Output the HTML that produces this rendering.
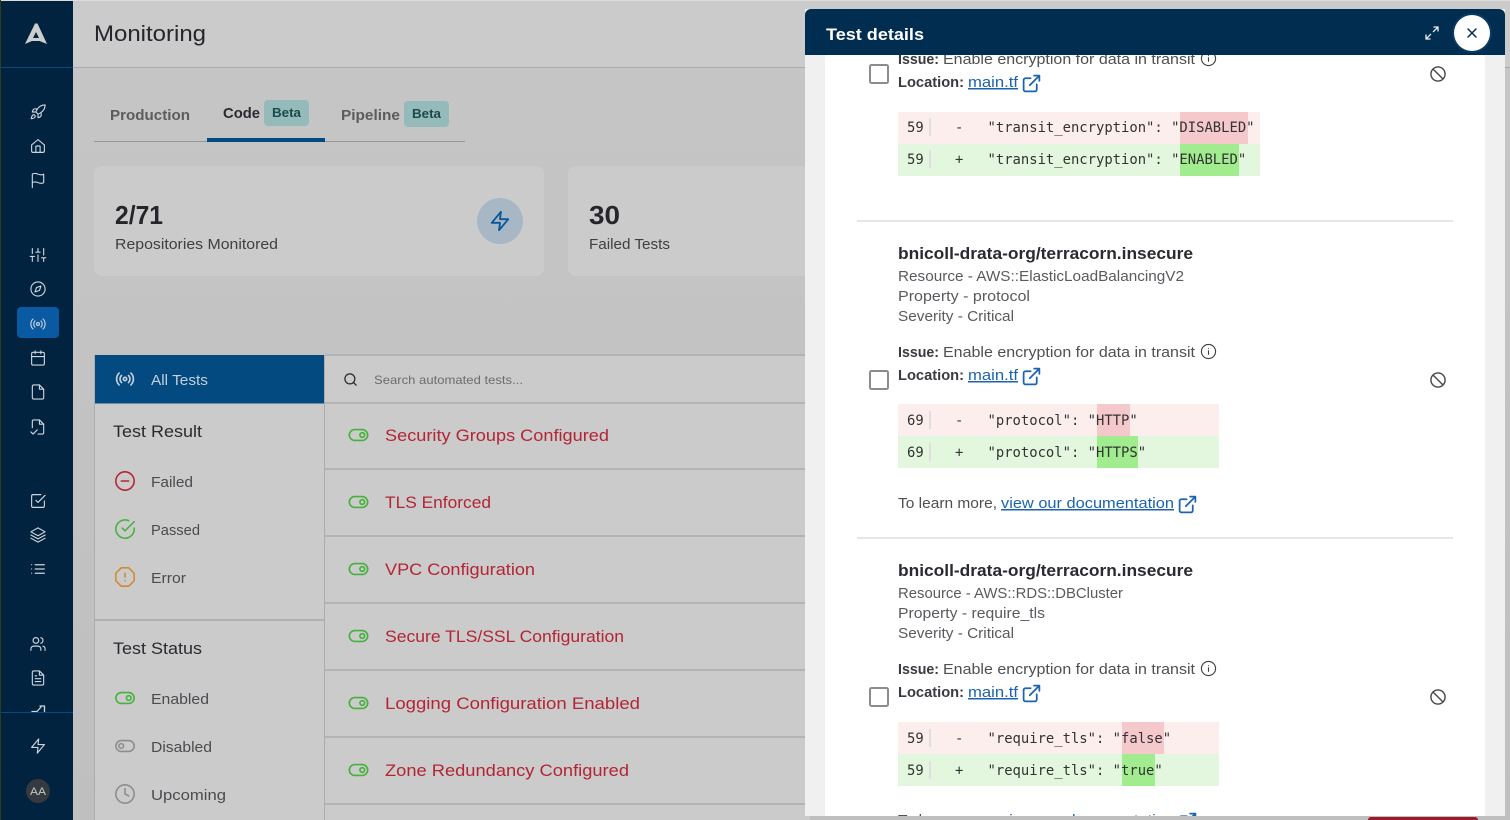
<!DOCTYPE html>
<html lang="en"><head><meta charset="utf-8"><title>Monitoring</title>
<style>
html,body{margin:0;padding:0;background:#c4c4c4;width:1510px;height:820px;overflow:hidden}
svg{display:block}
text{font-family:"Liberation Sans",sans-serif}
text.m{font-family:"DejaVu Sans Mono","Liberation Mono",monospace;font-size:13.870px;fill:#333}
</style></head><body>
<svg width="1510" height="820" viewBox="0 0 1510 820" xmlns="http://www.w3.org/2000/svg">
<defs>
<linearGradient id="bg" x1="0" y1="0" x2="0" y2="1"><stop offset="0" stop-color="#c6c6c6"/><stop offset="1" stop-color="#bfbfbf"/></linearGradient>
<clipPath id="body"><rect x="805" y="55" width="700" height="761"/></clipPath>
<symbol id="rocket" viewBox="0 0 24 24"><path d="M4.500 16.500c-1.500 1.300-2 5-2 5s3.700-.5 5-2c.7-.8.7-2.100-.1-2.900a2.200 2.200 0 0 0-2.900-.1z"/><path d="m12 15-3-3a22 22 0 0 1 2-3.950A12.900 12.900 0 0 1 22 2c0 2.700-.8 7.500-6 11a22.400 22.400 0 0 1-4 2z"/><path d="M9 12H4s.55-3 2-4c1.600-1.100 5 0 5 0M12 15v5s3-.55 4-2c1.100-1.600 0-5 0-5"/></symbol>
<symbol id="home" viewBox="0 0 24 24"><path d="M3 10.500 12 3l9 7.500V19a2 2 0 0 1-2 2H5a2 2 0 0 1-2-2z"/><path d="M9 21v-8a1 1 0 0 1 1-1h4a1 1 0 0 1 1 1v8"/></symbol>
<symbol id="flag" viewBox="0 0 24 24"><path d="M4 15s1-1 4-1 5 2 8 2 4-1 4-1V3s-1 1-4 1-5-2-8-2-4 1-4 1z"/><path d="M4 22v-7"/></symbol>
<symbol id="sliders" viewBox="0 0 24 24"><path d="M4 21v-7M4 10V3M12 21v-9M12 8V3M20 21v-5M20 12V3M1 14h6M9 8h6M17 16h6"/></symbol>
<symbol id="compass" viewBox="0 0 24 24"><circle cx="12" cy="12" r="10"/><path d="m16.200 7.800-2.100 6.300-6.300 2.100 2.100-6.300z"/></symbol>
<symbol id="radio" viewBox="0 0 24 24"><circle cx="12" cy="12" r="2"/><path d="M16.200 7.800a6 6 0 0 1 0 8.500M7.800 16.200a6 6 0 0 1 0-8.500M19.100 4.900a10 10 0 0 1 0 14.200M4.900 19.100a10 10 0 0 1 0-14.200"/></symbol>
<symbol id="cal" viewBox="0 0 24 24"><rect x="3" y="4" width="18" height="18" rx="2"/><path d="M8 2v4M16 2v4M3 10h18"/></symbol>
<symbol id="file" viewBox="0 0 24 24"><path d="M14 2H6a2 2 0 0 0-2 2v16a2 2 0 0 0 2 2h12a2 2 0 0 0 2-2V8z"/><path d="M14 2v6h6"/></symbol>
<symbol id="filecheck" viewBox="0 0 24 24"><path d="M4 13V4a2 2 0 0 1 2-2h8l6 6v12a2 2 0 0 1-2 2h-6"/><path d="M14 2v6h6M2 19l3 3 6-6"/></symbol>
<symbol id="check" viewBox="0 0 24 24"><path d="m9 11 3 3L22 4"/><path d="M21 12v7a2 2 0 0 1-2 2H5a2 2 0 0 1-2-2V5a2 2 0 0 1 2-2h11"/></symbol>
<symbol id="layers" viewBox="0 0 24 24"><path d="m12 2 10 5.500L12 13 2 7.500z"/><path d="m2 12 10 5.500L22 12M2 16.500 12 22l10-5.500"/></symbol>
<symbol id="list" viewBox="0 0 24 24"><path d="M8 6h13M8 12h13M8 18h13M3 6h.01M3 12h.01M3 18h.01"/></symbol>
<symbol id="users" viewBox="0 0 24 24"><path d="M16 21v-2a4 4 0 0 0-4-4H6a4 4 0 0 0-4 4v2"/><circle cx="9" cy="7" r="4"/><path d="M22 21v-2a4 4 0 0 0-3-3.870M16 3.130a4 4 0 0 1 0 7.750"/></symbol>
<symbol id="filetext" viewBox="0 0 24 24"><path d="M14 2H6a2 2 0 0 0-2 2v16a2 2 0 0 0 2 2h12a2 2 0 0 0 2-2V8z"/><path d="M14 2v6h6M16 13H8M16 17H8M10 9H8"/></symbol>
<symbol id="bolt" viewBox="0 0 24 24"><path d="M13 2 3 14h9l-1 8 10-12h-9z"/></symbol>
<symbol id="ext" viewBox="0 0 24 24"><path d="M18 13v6a2 2 0 0 1-2 2H5a2 2 0 0 1-2-2V8a2 2 0 0 1 2-2h6"/><path d="M15 3h6v6M10 14 21 3"/></symbol>
<symbol id="info" viewBox="0 0 24 24"><circle cx="12" cy="12" r="10"/><path d="M12 16v-5M12 8h.01"/></symbol>
<symbol id="ban" viewBox="0 0 24 24"><circle cx="12" cy="12" r="10"/><path d="m4.900 4.900 14.200 14.200"/></symbol>
<symbol id="toggle" viewBox="0 0 24 24"><rect x="1" y="5.500" width="22" height="13" rx="6.500"/><circle cx="16.500" cy="12" r="2.800"/></symbol>
<symbol id="toggleoff" viewBox="0 0 24 24"><rect x="1" y="5.500" width="22" height="13" rx="6.500"/><circle cx="7.500" cy="12" r="2.800"/></symbol>
<symbol id="clock" viewBox="0 0 24 24"><circle cx="12" cy="12" r="10"/><path d="M12 6v6l4 2"/></symbol>
<symbol id="search" viewBox="0 0 24 24"><circle cx="11" cy="11" r="8"/><path d="m21 21-4.300-4.300"/></symbol>
<symbol id="minus" viewBox="0 0 24 24"><circle cx="12" cy="12" r="10"/><path d="M8 12h8"/></symbol>
<symbol id="passed" viewBox="0 0 24 24"><path d="M22 11v1a10 10 0 1 1-6-9.100"/><path d="m22 4-10 10-3-3"/></symbol>
<symbol id="octagon" viewBox="0 0 24 24"><path d="M7.900 2h8.200L22 7.900v8.200L16.100 22H7.900L2 16.100V7.900z"/><path d="M12 8v4M12 16h.01"/></symbol>
<symbol id="expand" viewBox="0 0 24 24"><path d="M15 3h6v6M14 10l7-7M9 21H3v-6M10 14l-7 7"/></symbol>
</defs>

<rect width="1510" height="820" fill="url(#bg)"/>
<rect x="0" y="0" width="1510" height="1" fill="#dcdcdc"/>
<rect x="0" y="0" width="1" height="820" fill="#2f3d1c"/>
<!-- header -->
<rect x="73" y="1" width="1437" height="66" fill="#cbcbcb"/>
<rect x="73" y="67" width="1437" height="1" fill="#a9a9a9"/>
<text x="94" y="41" font-size="22" fill="#25252b" textLength="112" lengthAdjust="spacingAndGlyphs">Monitoring</text>

<!-- tabs -->
<rect x="94" y="141" width="371" height="1" fill="#989898"/>
<rect x="207" y="138" width="118" height="4" fill="#034a80"/>
<text x="110" y="120" font-size="15" font-weight="700" fill="#5c5c5c" textLength="80" lengthAdjust="spacingAndGlyphs">Production</text>
<text x="223" y="118" font-size="15" font-weight="700" fill="#2a2a30" textLength="37" lengthAdjust="spacingAndGlyphs">Code</text>
<rect x="264" y="100" width="45" height="26" rx="4" fill="#95baba"/>
<text x="272" y="117" font-size="13" font-weight="700" fill="#1c4a4d" textLength="29" lengthAdjust="spacingAndGlyphs">Beta</text>
<text x="341" y="120" font-size="15" font-weight="700" fill="#5c5c5c" textLength="59" lengthAdjust="spacingAndGlyphs">Pipeline</text>
<rect x="404" y="101" width="45" height="26" rx="4" fill="#95baba"/>
<text x="412" y="118" font-size="13" font-weight="700" fill="#1c4a4d" textLength="29" lengthAdjust="spacingAndGlyphs">Beta</text>

<!-- cards -->
<rect x="94" y="166" width="450" height="110" rx="8" fill="#cbcbcb"/>
<rect x="568" y="166" width="300" height="110" rx="8" fill="#cbcbcb"/>
<text x="115" y="224" font-size="26" font-weight="700" fill="#25252b" textLength="48" lengthAdjust="spacingAndGlyphs">2/71</text>
<text x="115" y="249" font-size="15" fill="#3f3f44" textLength="163" lengthAdjust="spacingAndGlyphs">Repositories Monitored</text>
<circle cx="500" cy="221" r="23" fill="#a8b7c5"/>
<use href="#bolt" x="489" y="210" width="22" height="22" fill="none" stroke="#0a5799" stroke-width="2" stroke-linejoin="round"/>
<text x="589" y="224" font-size="26" font-weight="700" fill="#25252b" textLength="31" lengthAdjust="spacingAndGlyphs">30</text>
<text x="589" y="249" font-size="15" fill="#3f3f44" textLength="81" lengthAdjust="spacingAndGlyphs">Failed Tests</text>

<!-- filter panel -->
<rect x="94" y="355" width="231" height="465" fill="#cbcbcb"/>
<rect x="94" y="355" width="1" height="465" fill="#adadad"/>
<rect x="324" y="355" width="1" height="465" fill="#adadad"/>
<rect x="95" y="355" width="229" height="49" fill="#034a80"/>
<rect x="95" y="403" width="229" height="1" fill="#6f8ba3"/>
<use href="#radio" x="115" y="369" width="20" height="20" fill="none" stroke="#c4cfd9" stroke-width="2" stroke-linecap="round"/>
<text x="151" y="385" font-size="15" fill="#c4cfd9" textLength="57" lengthAdjust="spacingAndGlyphs">All Tests</text>
<text x="113" y="437" font-size="17" fill="#2a2a30" textLength="89" lengthAdjust="spacingAndGlyphs">Test Result</text>
<use href="#minus" x="114" y="470" width="22" height="22" fill="none" stroke="#b32535" stroke-width="1.700" stroke-linecap="round"/>
<text x="151" y="487" font-size="15" fill="#4b4b50" textLength="42" lengthAdjust="spacingAndGlyphs">Failed</text>
<use href="#passed" x="114" y="518" width="22" height="22" fill="none" stroke="#46b13c" stroke-width="1.700" stroke-linecap="round" stroke-linejoin="round"/>
<text x="151" y="535" font-size="15" fill="#4b4b50" textLength="49" lengthAdjust="spacingAndGlyphs">Passed</text>
<use href="#octagon" x="114" y="566" width="22" height="22" fill="none" stroke="#cf8a2e" stroke-width="1.700" stroke-linecap="round" stroke-linejoin="round"/>
<text x="151" y="583" font-size="15" fill="#4b4b50" textLength="35" lengthAdjust="spacingAndGlyphs">Error</text>
<rect x="95" y="619" width="229" height="2" fill="#b0b0b0"/>
<text x="113" y="654" font-size="17" fill="#2a2a30" textLength="89" lengthAdjust="spacingAndGlyphs">Test Status</text>
<use href="#toggle" x="115" y="688" width="20" height="20" fill="none" stroke="#46b13c" stroke-width="1.900"/>
<text x="151" y="704" font-size="15" fill="#4b4b50" textLength="58" lengthAdjust="spacingAndGlyphs">Enabled</text>
<use href="#toggleoff" x="115" y="736" width="20" height="20" fill="none" stroke="#8d8d8d" stroke-width="1.900"/>
<text x="151" y="752" font-size="15" fill="#4b4b50" textLength="61" lengthAdjust="spacingAndGlyphs">Disabled</text>
<use href="#clock" x="114" y="783" width="22" height="22" fill="none" stroke="#8d8d8d" stroke-width="1.700" stroke-linecap="round" stroke-linejoin="round"/>
<text x="151" y="800" font-size="15" fill="#4b4b50" textLength="75" lengthAdjust="spacingAndGlyphs">Upcoming</text>

<!-- list -->
<rect x="325" y="355" width="485" height="465" fill="#cbcbcb"/>
<rect x="325" y="354" width="485" height="2" fill="#b4b4b4"/>
<rect x="325" y="402" width="485" height="2" fill="#b4b4b4"/>
<rect x="325" y="468" width="485" height="2" fill="#b4b4b4"/>
<rect x="325" y="535" width="485" height="2" fill="#b4b4b4"/>
<rect x="325" y="602" width="485" height="2" fill="#b4b4b4"/>
<rect x="325" y="669" width="485" height="2" fill="#b4b4b4"/>
<rect x="325" y="736" width="485" height="2" fill="#b4b4b4"/>
<rect x="325" y="803" width="485" height="2" fill="#b4b4b4"/>
<use href="#search" x="343" y="372" width="15" height="15" fill="none" stroke="#2a2a30" stroke-width="2" stroke-linecap="round"/>
<text x="374" y="384" font-size="12" fill="#6d6d6d" textLength="149" lengthAdjust="spacingAndGlyphs">Search automated tests...</text>
<g fill="none" stroke="#46b13c" stroke-width="2">
<use href="#toggle" x="348.500" y="425" width="20" height="20"/>
<use href="#toggle" x="348.500" y="492" width="20" height="20"/>
<use href="#toggle" x="348.500" y="559" width="20" height="20"/>
<use href="#toggle" x="348.500" y="626" width="20" height="20"/>
<use href="#toggle" x="348.500" y="693" width="20" height="20"/>
<use href="#toggle" x="348.500" y="760" width="20" height="20"/>
</g>
<g font-size="17" fill="#b32535">
<text x="385" y="441" textLength="224" lengthAdjust="spacingAndGlyphs">Security Groups Configured</text>
<text x="385" y="508" textLength="106" lengthAdjust="spacingAndGlyphs">TLS Enforced</text>
<text x="385" y="575" textLength="150" lengthAdjust="spacingAndGlyphs">VPC Configuration</text>
<text x="385" y="642" textLength="239" lengthAdjust="spacingAndGlyphs">Secure TLS/SSL Configuration</text>
<text x="385" y="709" textLength="255" lengthAdjust="spacingAndGlyphs">Logging Configuration Enabled</text>
<text x="385" y="776" textLength="244" lengthAdjust="spacingAndGlyphs">Zone Redundancy Configured</text>
</g>

<!-- sidebar -->
<rect x="1" y="1" width="72" height="819" fill="#012340"/>
<rect x="1" y="67" width="72" height="1" fill="#0b4a7c"/>
<path fill-rule="evenodd" d="M35 23.500h2.500L47 44l-7.500-3H32l-7 3zM36 32l-3 6h6z" fill="#cdcdcd"/>
<rect x="17" y="307" width="42" height="31" rx="4" fill="#0a59a3"/>
<g fill="none" stroke="#cdd4db" stroke-width="1.600" stroke-linecap="round" stroke-linejoin="round">
<use href="#rocket" x="29.500" y="103.500" width="17" height="17"/>
<use href="#home" x="29.500" y="137.500" width="17" height="17"/>
<use href="#flag" x="29.500" y="172" width="17" height="17"/>
<use href="#sliders" x="29.500" y="246.500" width="17" height="17"/>
<use href="#compass" x="29.500" y="280.500" width="17" height="17"/>
<use href="#radio" x="29.500" y="315.500" width="17" height="17"/>
<use href="#cal" x="29.500" y="349.500" width="17" height="17"/>
<use href="#file" x="29.500" y="383.500" width="17" height="17"/>
<use href="#filecheck" x="29.500" y="418.500" width="17" height="17"/>
<use href="#check" x="29.500" y="492.500" width="17" height="17"/>
<use href="#layers" x="29.500" y="526.500" width="17" height="17"/>
<use href="#list" x="29.500" y="560.500" width="17" height="17"/>
<use href="#users" x="29.500" y="635.500" width="17" height="17"/>
<use href="#filetext" x="29.500" y="669.500" width="17" height="17"/>
<path d="M32 711.500h5l4-4.500M40 706h4.500v6" stroke-width="1.300"/>
<use href="#bolt" x="29.500" y="737.500" width="17" height="17"/>
</g>
<rect x="1" y="712" width="72" height="1" fill="#0b4a7c"/>
<circle cx="38" cy="791" r="12" fill="#343a40"/>
<text x="30" y="795" font-size="11" fill="#c6c6c6" textLength="16" lengthAdjust="spacingAndGlyphs">AA</text>

<!-- modal -->
<rect x="805" y="9" width="700" height="807" fill="#f0f0f0"/>
<rect x="825" y="55" width="660" height="761" fill="#fff"/>
<rect x="1368" y="817" width="110" height="6" rx="3" fill="#9c1a2a"/>
<g clip-path="url(#body)">
<!-- section 1 tail -->
<text x="898" y="64" font-size="15" font-weight="700" fill="#3a3a40" textLength="41" lengthAdjust="spacingAndGlyphs">Issue:</text>
<text x="943" y="64" font-size="15" fill="#4f4f54" textLength="252" lengthAdjust="spacingAndGlyphs">Enable encryption for data in transit</text>
<use href="#info" x="1200" y="50" width="17" height="17" fill="none" stroke="#3f3f44" stroke-width="1.600" stroke-linecap="round"/>
<rect x="870" y="65" width="18" height="18" rx="1.500" fill="#fff" stroke="#8c8c8c" stroke-width="2"/>
<text x="898" y="87" font-size="15" font-weight="700" fill="#3a3a40" textLength="66" lengthAdjust="spacingAndGlyphs">Location:</text>
<text x="968" y="87" font-size="15" fill="#1b64ad" text-decoration="underline" textLength="50" lengthAdjust="spacingAndGlyphs">main.tf</text>
<use href="#ext" x="1021" y="73" width="21" height="21" fill="none" stroke="#1b64ad" stroke-width="2" stroke-linecap="round" stroke-linejoin="round"/>
<use href="#ban" x="1429.500" y="65.500" width="17" height="17" fill="none" stroke="#47474c" stroke-width="2"/>
<rect x="898" y="112" width="362" height="32" fill="#fdeeee"/>
<rect x="898" y="144" width="362" height="32" fill="#e3f7df"/>
<rect x="1180" y="112" width="68" height="32" fill="#f5c9cb"/>
<rect x="1180" y="144" width="59" height="32" fill="#a2ec90"/>
<rect x="929" y="118" width="2" height="18" fill="#dfdfdf"/>
<rect x="929" y="150" width="2" height="18" fill="#dfdfdf"/>
<text class="m" x="907" y="132">59</text><text class="m" x="955" y="132">-</text><text class="m" x="987.500" y="132">"transit_encryption": "DISABLED"</text>
<text class="m" x="907" y="164">59</text><text class="m" x="955" y="164">+</text><text class="m" x="987.500" y="164">"transit_encryption": "ENABLED"</text>
<rect x="857" y="220" width="596" height="2" fill="#e6e6e6"/>
<!-- section 2 -->
<text x="898" y="259" font-size="17" font-weight="700" fill="#2a2a30" textLength="295" lengthAdjust="spacingAndGlyphs">bnicoll-drata-org/terracorn.insecure</text>
<text x="898" y="281" font-size="15" fill="#5a5a5f" textLength="286" lengthAdjust="spacingAndGlyphs">Resource - AWS::ElasticLoadBalancingV2</text>
<text x="898" y="301" font-size="15" fill="#5a5a5f" textLength="132" lengthAdjust="spacingAndGlyphs">Property - protocol</text>
<text x="898" y="321" font-size="15" fill="#5a5a5f" textLength="116" lengthAdjust="spacingAndGlyphs">Severity - Critical</text>
<text x="898" y="357" font-size="15" font-weight="700" fill="#3a3a40" textLength="41" lengthAdjust="spacingAndGlyphs">Issue:</text>
<text x="943" y="357" font-size="15" fill="#4f4f54" textLength="252" lengthAdjust="spacingAndGlyphs">Enable encryption for data in transit</text>
<use href="#info" x="1200" y="343" width="17" height="17" fill="none" stroke="#3f3f44" stroke-width="1.600" stroke-linecap="round"/>
<rect x="870" y="371" width="18" height="18" rx="1.500" fill="#fff" stroke="#8c8c8c" stroke-width="2"/>
<text x="898" y="380" font-size="15" font-weight="700" fill="#3a3a40" textLength="66" lengthAdjust="spacingAndGlyphs">Location:</text>
<text x="968" y="380" font-size="15" fill="#1b64ad" text-decoration="underline" textLength="50" lengthAdjust="spacingAndGlyphs">main.tf</text>
<use href="#ext" x="1021" y="366" width="21" height="21" fill="none" stroke="#1b64ad" stroke-width="2" stroke-linecap="round" stroke-linejoin="round"/>
<use href="#ban" x="1429.500" y="371.500" width="17" height="17" fill="none" stroke="#47474c" stroke-width="2"/>
<rect x="898" y="404" width="321" height="32" fill="#fdeeee"/>
<rect x="898" y="436" width="321" height="32" fill="#e3f7df"/>
<rect x="1097" y="404" width="33" height="32" fill="#f5c9cb"/>
<rect x="1097" y="436" width="41" height="32" fill="#a2ec90"/>
<rect x="929" y="411" width="2" height="18" fill="#dfdfdf"/>
<rect x="929" y="443" width="2" height="18" fill="#dfdfdf"/>
<text class="m" x="907" y="425">69</text><text class="m" x="955" y="425">-</text><text class="m" x="987.500" y="425">"protocol": "HTTP"</text>
<text class="m" x="907" y="457">69</text><text class="m" x="955" y="457">+</text><text class="m" x="987.500" y="457">"protocol": "HTTPS"</text>
<text x="898" y="508" font-size="15" fill="#4f4f54" textLength="99" lengthAdjust="spacingAndGlyphs">To learn more,</text>
<text x="1001" y="508" font-size="15" fill="#1b64ad" text-decoration="underline" textLength="173" lengthAdjust="spacingAndGlyphs">view our documentation</text>
<use href="#ext" x="1177" y="494" width="21" height="21" fill="none" stroke="#1b64ad" stroke-width="2" stroke-linecap="round" stroke-linejoin="round"/>
<rect x="857" y="537" width="596" height="2" fill="#e6e6e6"/>
<!-- section 3 -->
<text x="898" y="576" font-size="17" font-weight="700" fill="#2a2a30" textLength="295" lengthAdjust="spacingAndGlyphs">bnicoll-drata-org/terracorn.insecure</text>
<text x="898" y="598" font-size="15" fill="#5a5a5f" textLength="225" lengthAdjust="spacingAndGlyphs">Resource - AWS::RDS::DBCluster</text>
<text x="898" y="618" font-size="15" fill="#5a5a5f" textLength="147" lengthAdjust="spacingAndGlyphs">Property - require_tls</text>
<text x="898" y="638" font-size="15" fill="#5a5a5f" textLength="116" lengthAdjust="spacingAndGlyphs">Severity - Critical</text>
<text x="898" y="674" font-size="15" font-weight="700" fill="#3a3a40" textLength="41" lengthAdjust="spacingAndGlyphs">Issue:</text>
<text x="943" y="674" font-size="15" fill="#4f4f54" textLength="252" lengthAdjust="spacingAndGlyphs">Enable encryption for data in transit</text>
<use href="#info" x="1200" y="660" width="17" height="17" fill="none" stroke="#3f3f44" stroke-width="1.600" stroke-linecap="round"/>
<rect x="870" y="688" width="18" height="18" rx="1.500" fill="#fff" stroke="#8c8c8c" stroke-width="2"/>
<text x="898" y="697" font-size="15" font-weight="700" fill="#3a3a40" textLength="66" lengthAdjust="spacingAndGlyphs">Location:</text>
<text x="968" y="697" font-size="15" fill="#1b64ad" text-decoration="underline" textLength="50" lengthAdjust="spacingAndGlyphs">main.tf</text>
<use href="#ext" x="1021" y="683" width="21" height="21" fill="none" stroke="#1b64ad" stroke-width="2" stroke-linecap="round" stroke-linejoin="round"/>
<use href="#ban" x="1429.500" y="688.500" width="17" height="17" fill="none" stroke="#47474c" stroke-width="2"/>
<rect x="898" y="722" width="321" height="32" fill="#fdeeee"/>
<rect x="898" y="754" width="321" height="32" fill="#e3f7df"/>
<rect x="1122" y="722" width="42" height="32" fill="#f5c9cb"/>
<rect x="1122" y="754" width="33" height="32" fill="#a2ec90"/>
<rect x="929" y="729" width="2" height="18" fill="#dfdfdf"/>
<rect x="929" y="761" width="2" height="18" fill="#dfdfdf"/>
<text class="m" x="907" y="743">59</text><text class="m" x="955" y="743">-</text><text class="m" x="987.500" y="743">"require_tls": "false"</text>
<text class="m" x="907" y="775">59</text><text class="m" x="955" y="775">+</text><text class="m" x="987.500" y="775">"require_tls": "true"</text>
<text x="898" y="825" font-size="15" fill="#4f4f54" textLength="99" lengthAdjust="spacingAndGlyphs">To learn more,</text>
<text x="1001" y="825" font-size="15" fill="#1b64ad" textLength="173" lengthAdjust="spacingAndGlyphs">view our documentation</text>
<use href="#ext" x="1177" y="811" width="21" height="21" fill="none" stroke="#1b64ad" stroke-width="2" stroke-linecap="round" stroke-linejoin="round"/>
</g>
<!-- modal header -->
<path d="M805 55V15a6 6 0 0 1 6-6h688a6 6 0 0 1 6 6v40z" fill="#012d50"/>
<text x="826" y="40" font-size="17" font-weight="700" fill="#fff" textLength="98" lengthAdjust="spacingAndGlyphs">Test details</text>
<use href="#expand" x="1424" y="25" width="16" height="16" fill="none" stroke="#e8edf2" stroke-width="2" stroke-linecap="round" stroke-linejoin="round"/>
<circle cx="1472" cy="33" r="20" fill="#0a3a63"/>
<circle cx="1472" cy="33" r="18" fill="#fff"/>
<path d="M1468 29l8 8M1476 29l-8 8" stroke="#012d50" stroke-width="1.500" stroke-linecap="round"/>
</svg>
</body></html>
